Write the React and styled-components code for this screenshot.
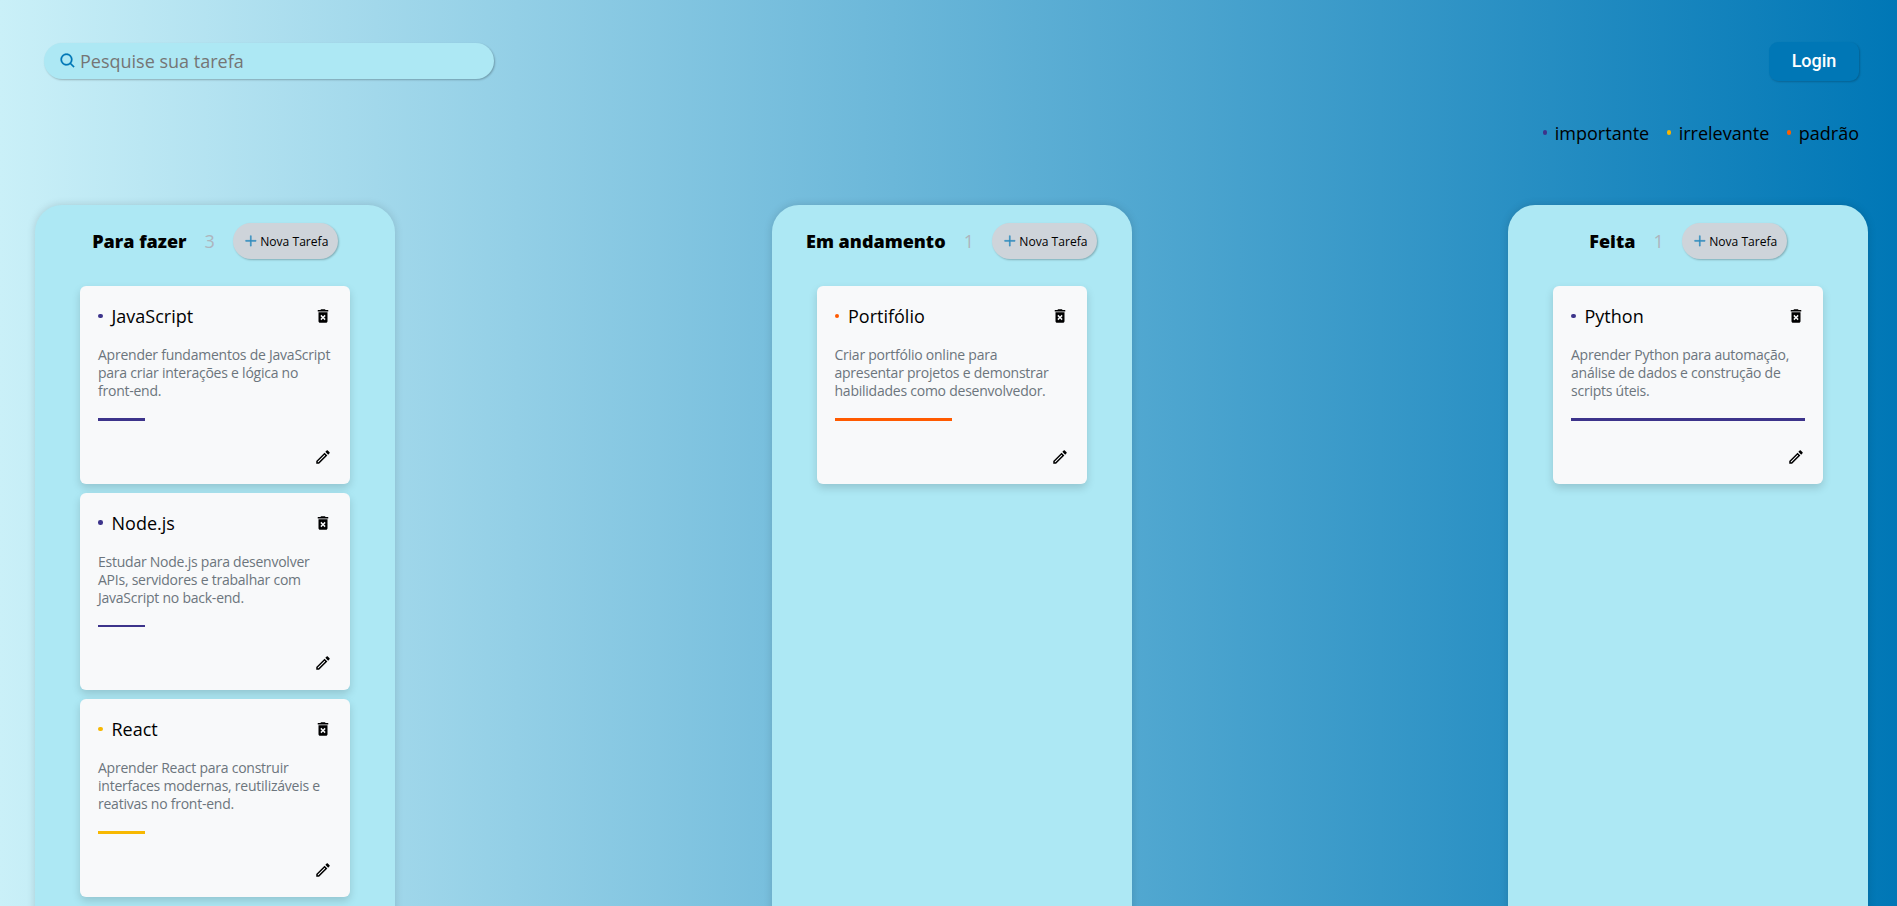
import React from "react";
import styled, { createGlobalStyle } from "styled-components";
import { BiSearch } from "react-icons/bi";
import { MdDeleteForever, MdOutlineEdit } from "react-icons/md";
import { GoPlus } from "react-icons/go";

const GlobalStyle = createGlobalStyle`
  * { box-sizing: border-box; margin: 0; padding: 0; }
  html { font-size: 18px; }
  body {
    font-family: "Open Sans", sans-serif;
    overflow: hidden;
    color: #000;
  }
`;

const Page = styled.div`
  height: 100vh;
  overflow: hidden;
  display: flex;
  flex-direction: column;
  background: linear-gradient(90deg, #caf0f8, #0077b6);
`;

const Header = styled.header`
  display: flex;
  align-items: center;
  justify-content: space-between;
  padding: 41px 38px 0 44px;
  height: 81px;
`;

const SearchBox = styled.label`
  display: flex;
  align-items: center;
  width: 25rem;
  height: 2rem;
  padding: 0 14px 0 14.5px;
  gap: 3.5px;
  border-radius: 1rem;
  background: #ade8f4;
  box-shadow: 1px 1px 2px rgba(0, 0, 0, 0.25);
  svg { color: #0077b6; flex: none; stroke-width: 0.3px; }
`;

const SearchInput = styled.input`
  flex: 1;
  border: 0;
  outline: 0;
  background: transparent;
  font: 1rem "Open Sans", sans-serif;
  &::placeholder { color: #757575; }
`;

const LoginButton = styled.button`
  width: 90px;
  height: 39px;
  padding-bottom: 2px;
  border: 0;
  border-radius: 9px;
  background: #0077b6;
  color: #fff;
  font: 500 1rem Roboto, sans-serif;
  box-shadow: 1px 1px 2px rgba(0, 0, 0, 0.2);
`;

const Legend = styled.ul`
  display: flex;
  justify-content: flex-end;
  gap: 17.5px;
  height: 124px;
  padding: 39px 38px 0 0;
  list-style: none;
`;

const LegendItem = styled.li`
  display: flex;
  align-items: center;
  gap: 7.5px;
  height: 25px;
`;

const Dot = styled.span`
  flex: none;
  width: ${(p) => p.$size}px;
  height: ${(p) => p.$size}px;
  border-radius: 50%;
  background: ${(p) => p.$color};
`;

const Board = styled.main`
  flex: 1;
  min-height: 0;
  display: flex;
  justify-content: space-between;
  padding: 0 29px 0 35px;
`;

const Column = styled.section`
  width: 20rem;
  height: 800px;
  display: flex;
  flex-direction: column;
  align-items: center;
  padding-top: 1rem;
  border-radius: 27px;
  background: #ade8f4;
  box-shadow: 0 0 9px rgba(0, 0, 0, 0.15);
`;

const ColumnHeader = styled.div`
  display: flex;
  align-items: center;
  gap: 1rem;
  height: 2rem;
  margin-bottom: 27px;
`;

const ColumnTitle = styled.h2`
  font-size: 1rem;
  font-weight: 800;
`;

const Count = styled.span`
  color: #adb5bd;
`;

const NewTask = styled.button`
  display: flex;
  align-items: center;
  justify-content: center;
  width: 105px;
  height: 36px;
  border: 0;
  border-radius: 18px;
  background: #ced4da;
  color: #000;
  font: 500 12.1px "Open Sans", sans-serif;
  box-shadow: 1px 1px 2px rgba(0, 0, 0, 0.25);
  svg { color: #0077b6; opacity: 0.8; stroke: currentColor; stroke-width: 0.4px; }
`;

const Card = styled.article`
  width: 15rem;
  height: 197.5px;
  flex: none;
  display: flex;
  flex-direction: column;
  padding: 1rem;
  margin-bottom: 0.5rem;
  border-radius: 6px;
  background: #f8f9fa;
  box-shadow: 0 4px 9px rgba(0, 0, 0, 0.15);
`;

const CardHead = styled.div`
  display: flex;
  align-items: center;
  gap: 9px;
  height: 24px;
  svg { margin-left: auto; }
`;

const CardTitle = styled.h3`
  font-size: 1rem;
  font-weight: 400;
`;

const Description = styled.p`
  margin-top: 18px;
  font-size: 14px;
  line-height: 18px;
  letter-spacing: -0.24px;
  color: #6c757d;
`;

const Progress = styled.div`
  flex: none;
  margin-top: 18px;
  width: ${(p) => p.$value}%;
  height: 2.5px;
  background: ${(p) => p.$color};
`;

const CardFoot = styled.div`
  display: flex;
  justify-content: flex-end;
  margin-top: auto;
`;

const colors = { importante: "#3d348b", irrelevante: "#f7b801", "padrão": "#ff5a00" };

const columns = [
  {
    title: "Para fazer",
    value: 20,
    tasks: [
      { title: "JavaScript", kind: "importante", text: "Aprender fundamentos de JavaScript para criar interações e lógica no front-end." },
      { title: "Node.js", kind: "importante", text: "Estudar Node.js para desenvolver APIs, servidores e trabalhar com JavaScript no back-end." },
      { title: "React", kind: "irrelevante", text: "Aprender React para construir interfaces modernas, reutilizáveis e reativas no front-end." },
    ],
  },
  {
    title: "Em andamento",
    value: 50,
    tasks: [
      { title: "Portifólio", kind: "padrão", text: "Criar portfólio online para apresentar projetos e demonstrar habilidades como desenvolvedor." },
    ],
  },
  {
    title: "Feita",
    value: 100,
    tasks: [
      { title: "Python", kind: "importante", text: "Aprender Python para automação, análise de dados e construção de scripts úteis." },
    ],
  },
];

function Task({ task, value }) {
  const color = colors[task.kind];
  return (
    <Card>
      <CardHead>
        <Dot $size={4.5} $color={color} />
        <CardTitle>{task.title}</CardTitle>
        <MdDeleteForever size={18} />
      </CardHead>
      <Description>{task.text}</Description>
      <Progress $value={value} $color={color} />
      <CardFoot>
        <MdOutlineEdit size={18} />
      </CardFoot>
    </Card>
  );
}

export default function App() {
  return (
    <Page>
      <GlobalStyle />
      <Header>
        <SearchBox>
          <BiSearch size={18} stroke="currentColor" />
          <SearchInput placeholder="Pesquise sua tarefa" />
        </SearchBox>
        <LoginButton>Login</LoginButton>
      </Header>
      <Legend>
        {Object.entries(colors).map(([name, color]) => (
          <LegendItem key={name}>
            <Dot $size={4.5} $color={color} />
            {name}
          </LegendItem>
        ))}
      </Legend>
      <Board>
        {columns.map((column) => (
          <Column key={column.title}>
            <ColumnHeader>
              <ColumnTitle>{column.title}</ColumnTitle>
              <Count>{column.tasks.length}</Count>
              <NewTask>
                <GoPlus size={18} />
                Nova Tarefa
              </NewTask>
            </ColumnHeader>
            {column.tasks.map((task) => (
              <Task key={task.title} task={task} value={column.value} />
            ))}
          </Column>
        ))}
      </Board>
    </Page>
  );
}
